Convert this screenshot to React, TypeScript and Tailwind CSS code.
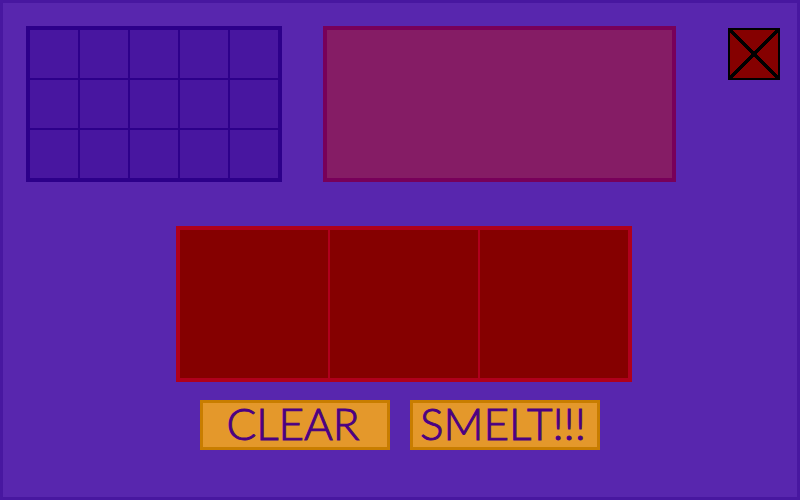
const inventorySlots = Array.from({ length: 15 }, (_, i) => i);
const furnaceSlots = [0, 1, 2];

function ActionButton({ label }: { label: string }) {
  return (
    <button
      type="button"
      className="flex h-[50px] w-[190px] items-center justify-center border-3 border-[#c87d00] bg-[#e4982b] pr-1 pb-1 font-['Lato',sans-serif] text-[44px] leading-none font-light text-[#4b0082] [-webkit-text-stroke:1px_#4b0082]"
    >
      {label}
    </button>
  );
}

function CloseButton() {
  return (
    <button type="button" aria-label="Close" className="shrink-0 p-0.5">
      <svg width="52" height="52" viewBox="0 0 52 52" shapeRendering="crispEdges" className="block">
        <rect x="1" y="1" width="50" height="50" fill="#850000" stroke="#000" strokeWidth="2" />
        <path d="M2 2L50 50M50 2L2 50" stroke="#000" strokeWidth="3.6" fill="none" />
      </svg>
    </button>
  );
}

export default function App() {
  return (
    <main className="min-h-screen border-3 border-[#4817a0] bg-[#5826ae]">
      <div className="flex items-start gap-[50px] pt-[23px] pr-[15px] pl-[23px]">
        <div className="flex flex-1 gap-[41px]">
          <div className="grid shrink-0 grid-cols-5 gap-0.5 border-4 border-[#2d008a] bg-[#2d008a]">
            {inventorySlots.map((slot) => (
              <div key={slot} className="size-12 bg-[#4816a0]" />
            ))}
          </div>
          <div className="flex-1 border-4 border-[#78005a] bg-[#851c65]" />
        </div>
        <CloseButton />
      </div>
      <div className="mt-11 flex justify-center pl-2">
        <div className="flex gap-0.5 border-4 border-[#b0001c] bg-[#b0001c]">
          {furnaceSlots.map((slot) => (
            <div key={slot} className="size-[148px] bg-[#850000]" />
          ))}
        </div>
      </div>
      <div className="mt-[18px] flex justify-center gap-5">
        <ActionButton label="CLEAR" />
        <ActionButton label="SMELT!!!" />
      </div>
    </main>
  );
}
